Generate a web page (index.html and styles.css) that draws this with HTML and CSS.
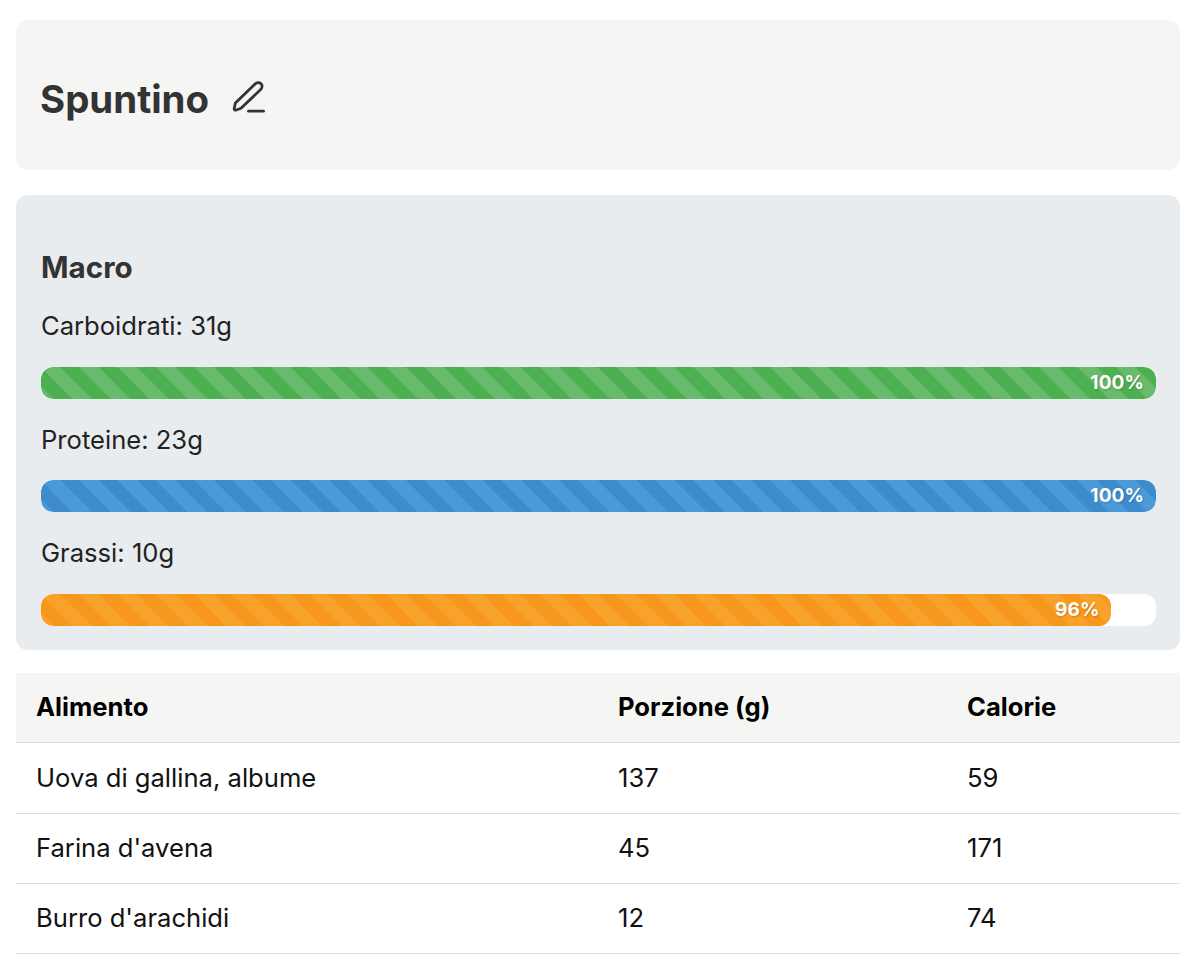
FILE: index.html
```html
<!DOCTYPE html>
<html lang="it">

<head>
    <meta charset="UTF-8" />
    <title>Spuntino</title>
    <link rel="stylesheet" href="styles.css">
</head>

<body>
    <div class="mealHeader">
        <h1>Spuntino</h1>
        <svg class="editIcon" width="36" height="36" viewBox="0 0 36 36" fill="none" stroke="#333" stroke-width="2.8" stroke-linecap="round" stroke-linejoin="round">
            <path d="M3.2 27.5 L4.4 22 L23.8 3.2 C25.8 1.2 28.4 1.2 30 2.7 C31.6 4.3 31.4 6.8 29.4 8.8 L10 27.2 L5.2 29 C4 29.4 3 28.7 3.2 27.5 Z" />
            <path d="M17.5 30.2 H32.5" />
        </svg>
    </div>

    <div class="macroBox">
        <h2>Macro</h2>

        <p class="macroLabel">Carboidrati: 31g</p>
        <div class="bar">
            <div class="barFill green" style="width: 100%">100%</div>
        </div>

        <p class="macroLabel">Proteine: 23g</p>
        <div class="bar">
            <div class="barFill blue" style="width: 100%">100%</div>
        </div>

        <p class="macroLabel">Grassi: 10g</p>
        <div class="bar">
            <div class="barFill orange" style="width: 96%">96%</div>
        </div>
    </div>

    <table class="foodTable">
        <thead>
            <tr>
                <th class="colName">Alimento</th>
                <th class="colPortion">Porzione (g)</th>
                <th>Calorie</th>
            </tr>
        </thead>
        <tbody>
            <tr>
                <td>Uova di gallina, albume</td>
                <td>137</td>
                <td>59</td>
            </tr>
            <tr>
                <td>Farina d'avena</td>
                <td>45</td>
                <td>171</td>
            </tr>
            <tr>
                <td>Burro d'arachidi</td>
                <td>12</td>
                <td>74</td>
            </tr>
        </tbody>
    </table>
</body>

</html>
```

FILE: styles.css
```css
* {
    box-sizing: border-box;
}

body {
    margin: 0;
    padding: 20px 20px 0 16px;
    background-color: #fff;
    font-family: Inter, "Liberation Sans", sans-serif;
    font-size: 25.6px;
    color: #333;
}

.mealHeader {
    display: flex;
    align-items: center;
    gap: 22px;
    height: 150px;
    padding: 8px 24px 0 24px;
    background-color: #f5f5f3;
    border-radius: 12px;
}

h1 {
    margin: 0;
    font-size: 38.4px;
    font-weight: 700;
}

.editIcon {
    flex: none;
}

.macroBox {
    margin-top: 25px;
    padding: 55px 24px 24px 25px;
    background-color: #e9ecef;
    border-radius: 12px;
}

h2 {
    margin: 0 0 1.25px;
    font-size: 29.6px;
    line-height: 34px;
    font-weight: 700;
}

.macroLabel {
    margin: 0;
    padding: 25px 0 25.5px;
    line-height: 31px;
    color: #222;
}

.bar {
    height: 32px;
    background-color: #fff;
    border-radius: 12px;
    overflow: hidden;
}

.barFill {
    height: 100%;
    padding-right: 12px;
    border-radius: 12px;
    text-align: right;
    font-size: 19.2px;
    line-height: 30px;
    font-weight: 700;
    color: #fff;
    text-shadow: 1px 1px 2px rgba(0, 0, 0, 0.2);
    background-size: 38.4px 38.4px;
    background-image: linear-gradient(45deg,
            var(--stripe) 25%, transparent 25%,
            transparent 50%, var(--stripe) 50%,
            var(--stripe) 75%, transparent 75%);
}

.green {
    --stripe: #68ba6c;
    background-color: #4caf50;
}

.blue {
    --stripe: #4a9ad8;
    background-color: #3d8bcd;
}

.orange {
    --stripe: #f8a22c;
    background-color: #f7981c;
}

.foodTable {
    width: 100%;
    margin-top: 23px;
    border-collapse: collapse;
    table-layout: fixed;
    color: #111;
}

.foodTable th,
.foodTable td {
    padding: 0 20px 2px;
    height: 70px;
    text-align: left;
    border-bottom: 1px solid #ddd;
}

.foodTable th {
    padding-bottom: 3px;
    background-color: #f5f5f3;
    font-weight: 700;
    color: #000;
}

.foodTable tbody tr:first-child td {
    height: 71px;
}

.colName {
    width: 582px;
}

.colPortion {
    width: 349px;
}
```
